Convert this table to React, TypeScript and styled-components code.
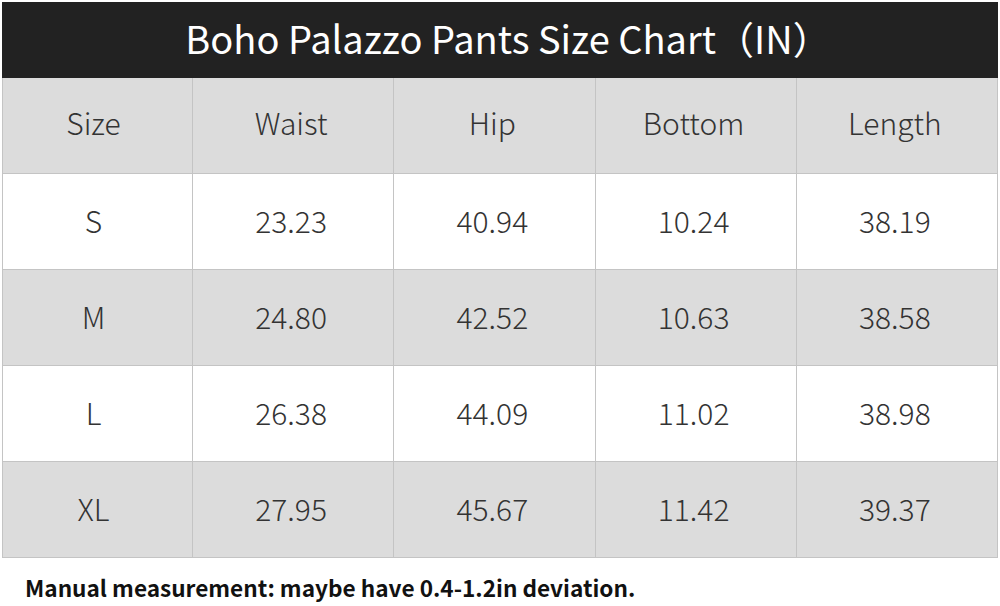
import React from "react";
import styled, { createGlobalStyle } from "styled-components";

const Global = createGlobalStyle`
  html, body { margin: 0; padding: 0; background: #fff; }
  body { font-family: "Noto Sans CJK SC", "Noto Sans", sans-serif; }
`;

const Page = styled.div`
  width: 1000px;
  height: 606px;
  padding: 2px 2px 0 2px;
  box-sizing: border-box;
  display: flex;
  flex-direction: column;
`;

const TitleBar = styled.div`
  height: 76px;
  background: #222222;
  color: #ffffff;
  display: flex;
  align-items: center;
  justify-content: center;
  font-size: 38px;
  padding-bottom: 5px;
  box-sizing: border-box;
  padding-left: 16px;
`;

const Grid = styled.div`
  display: grid;
  grid-template-columns: 189px repeat(4, 1fr);
  grid-auto-rows: 96px;
  border-left: 1px solid #c4c4c4;
  border-right: 1px solid #c4c4c4;
`;

const Cell = styled.div<{ $shade: boolean; $first: boolean; $head: boolean }>`
  background: ${(p) => (p.$shade ? "#dcdcdc" : "#ffffff")};
  border-left: ${(p) => (p.$first ? "none" : "1px solid #c4c4c4")};
  border-bottom: 1px solid #c4c4c4;
  display: flex;
  align-items: center;
  justify-content: center;
  font-size: 30px;
  font-weight: 300;
  color: #333333;
  padding-right: ${(p) => (p.$first ? "8px" : "4px")};
  padding-bottom: ${(p) => (p.$head ? "8px" : "3px")};
`;

const Note = styled.div`
  margin-top: 13px;
  padding-left: 23px;
  font-size: 22.6px;
  font-weight: 700;
  color: #111;
`;

const rows = [
  ["Size", "Waist", "Hip", "Bottom", "Length"],
  ["S", "23.23", "40.94", "10.24", "38.19"],
  ["M", "24.80", "42.52", "10.63", "38.58"],
  ["L", "26.38", "44.09", "11.02", "38.98"],
  ["XL", "27.95", "45.67", "11.42", "39.37"],
];

export default function App() {
  return (
    <>
      <Global />
      <Page>
        <TitleBar>Boho Palazzo Pants Size Chart（IN）</TitleBar>
        <Grid>
          {rows.map((r, i) =>
            r.map((c, j) => (
              <Cell
                key={`${i}-${j}`}
                $shade={i % 2 === 0}
                $first={j === 0}
                $head={i === 0}
              >
                {c}
              </Cell>
            ))
          )}
        </Grid>
        <Note>Manual measurement: maybe have 0.4-1.2in deviation.</Note>
      </Page>
    </>
  );
}
